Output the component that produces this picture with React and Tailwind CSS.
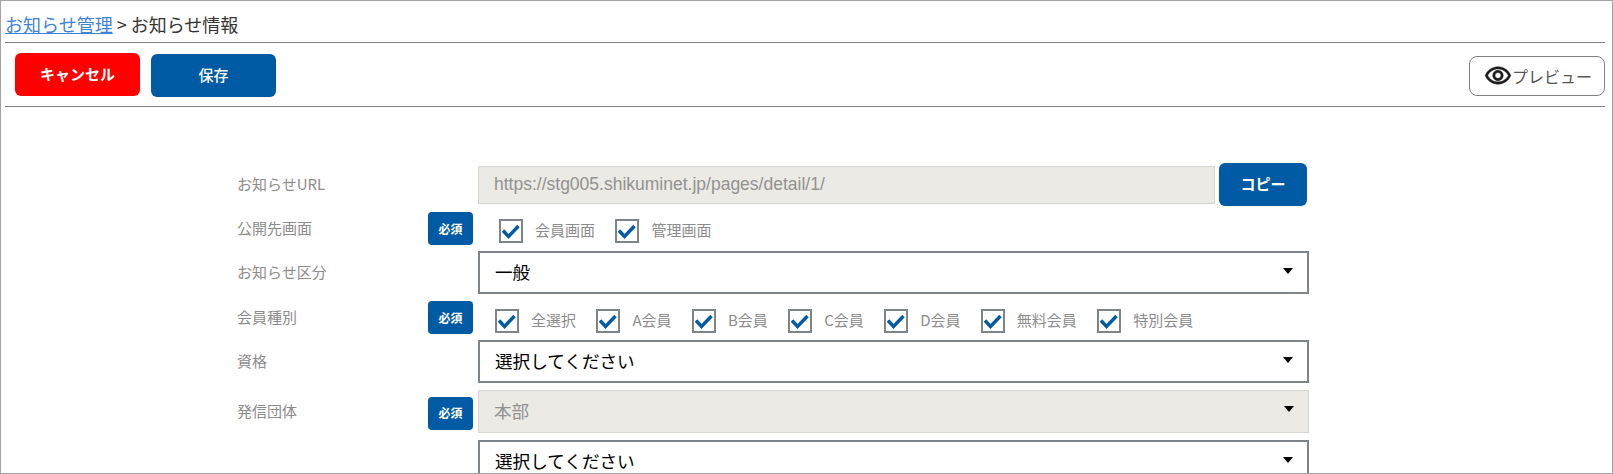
import React from 'react'

const jp = '"Noto Sans CJK JP", "Noto Sans", sans-serif'

const Badge = ({ className = '' }) => (
  <span className={`w-[45px] h-[33px] bg-[#005ba4] rounded-[4px] text-white text-[12px] font-bold flex items-center justify-center ${className}`}>必須</span>
)

const Check = ({ label }) => (
  <label className="flex items-center mr-[20.4px]">
    <span className="w-[24px] h-[24px] border-[2px] border-[#7f8489] flex items-center justify-center shrink-0">
      <svg width="20" height="20" viewBox="0 0 20 20"><path d="M2 9.5 L7.5 15.5 L17.5 5" fill="none" stroke="#005ba4" strokeWidth="3.4" /></svg>
    </span>
    <span className="ml-[12px] -mt-[2px] text-[15px] leading-[20px] text-[#8c8c8c]">{label}</span>
  </label>
)

const Arrow = ({ className = '' }) => (
  <svg width="10" height="6" viewBox="0 0 10 6" className={className}><polygon points="0,0 10,0 5,6" fill="#000" /></svg>
)

const Select = ({ value, disabled }) => (
  <div className={`w-[831px] h-[43px] flex items-center justify-between text-[17.6px] ${disabled ? 'pl-[15px] pr-[14px] bg-[#ebeae4] border border-[#d5d5d0] text-[#929292]' : 'pl-[15px] pr-[14px] bg-white border-[2px] border-[#7f8489] text-black'}`}>
    <span className="leading-[24px] -mt-[2px]">{value}</span>
    <Arrow className={disabled ? '-mt-[5px]' : '-mt-[3px]'} />
  </div>
)

const Row = ({ label, required, badgeClass, mt = 'mt-[6px]', children }) => (
  <div className={`flex items-center ${mt}`}>
    <div className="w-[191px] -mt-[1px] text-[15px] text-[#8c8c8c] leading-[20px]">{label}</div>
    <div className="w-[45px] mr-[5px]">{required && <Badge className={badgeClass} />}</div>
    {children}
  </div>
)

export default function App() {
  return (
    <div className="h-[474px] w-[1613px] overflow-hidden border border-[#a3a3a3] bg-white" style={{ fontFamily: jp }}>
      <div className="px-[4px]">
        <div className="h-[41px] pt-[10px] text-[18px] leading-[26px] text-[#333]">
          <a href="#" className="text-[#3d84d8] underline">お知らせ管理</a> &gt; お知らせ情報
        </div>
        <div className="w-[1600px] border-t border-[#808080]" />
        <div className="h-[63px] w-[1600px] flex items-start justify-between pl-[10px]">
          <div className="flex items-start gap-[11px] pt-[10px]">
            <button className="w-[125px] h-[43px] bg-[#ff0000] text-white text-[15px] font-bold rounded-[6px]">キャンセル</button>
            <button className="w-[125px] h-[43px] mt-[1px] bg-[#005ba4] text-white text-[15px] font-medium rounded-[6px]">保存</button>
          </div>
          <button className="w-[136px] h-[40px] mt-[13px] pl-[14px] border border-[#808080] rounded-[8px] flex items-center text-[16px] text-[#555]">
            <svg width="28" height="28" viewBox="0 0 24 24" fill="#1a1a1a" stroke="#1a1a1a" strokeWidth="0.4"><path d="M12 6c3.79 0 7.17 2.13 8.82 5.5C19.17 14.87 15.79 17 12 17s-7.17-2.13-8.82-5.5C4.83 8.13 8.21 6 12 6m0-2C7 4 2.73 7.11 1 11.5 2.73 15.89 7 19 12 19s9.27-3.11 11-7.5C21.27 7.11 17 4 12 4zm0 5c1.38 0 2.5 1.12 2.5 2.5S13.38 14 12 14s-2.5-1.12-2.5-2.5S10.62 9 12 9m0-2c-2.48 0-4.5 2.02-4.5 4.5S9.52 16 12 16s4.5-2.02 4.5-4.5S14.48 7 12 7z" /></svg>
            プレビュー
          </button>
        </div>
        <div className="w-[1600px] border-t border-[#808080]" />
      </div>

      <div className="pl-[236px] pt-[56px]">
        <Row label="お知らせURL" mt="mt-0">
          <div className="w-[737px] h-[38px] flex items-center pl-[15px] bg-[#ebeae4] border border-[#d5d5d0] text-[#929292] text-[17.5px]" style={{ fontFamily: '"Liberation Sans", sans-serif' }}>
            https://stg005.shikuminet.jp/pages/detail/1/
          </div>
          <button className="ml-[4px] w-[88px] h-[43px] bg-[#005ba4] text-white text-[15px] font-bold rounded-[6px]">コピー</button>
        </Row>
        <Row label="公開先画面" required>
          <div className="flex pl-[21px] pt-[4px]">
            <Check label="会員画面" />
            <Check label="管理画面" />
          </div>
        </Row>
        <Row label="お知らせ区分">
          <Select value="一般" />
        </Row>
        <Row label="会員種別" required mt="mt-[7px]">
          <div className="flex pl-[17px] pt-[7px]">
            {['全選択', 'A会員', 'B会員', 'C会員', 'D会員', '無料会員', '特別会員'].map((m) => (
              <Check key={m} label={m} />
            ))}
          </div>
        </Row>
        <Row label="資格">
          <Select value="選択してください" />
        </Row>
        <Row label="発信団体" required badgeClass="mt-[3px]" mt="mt-[7px]">
          <Select value="本部" disabled />
        </Row>
        <Row label="" mt="mt-[7px]">
          <Select value="選択してください" />
        </Row>
      </div>
    </div>
  )
}
